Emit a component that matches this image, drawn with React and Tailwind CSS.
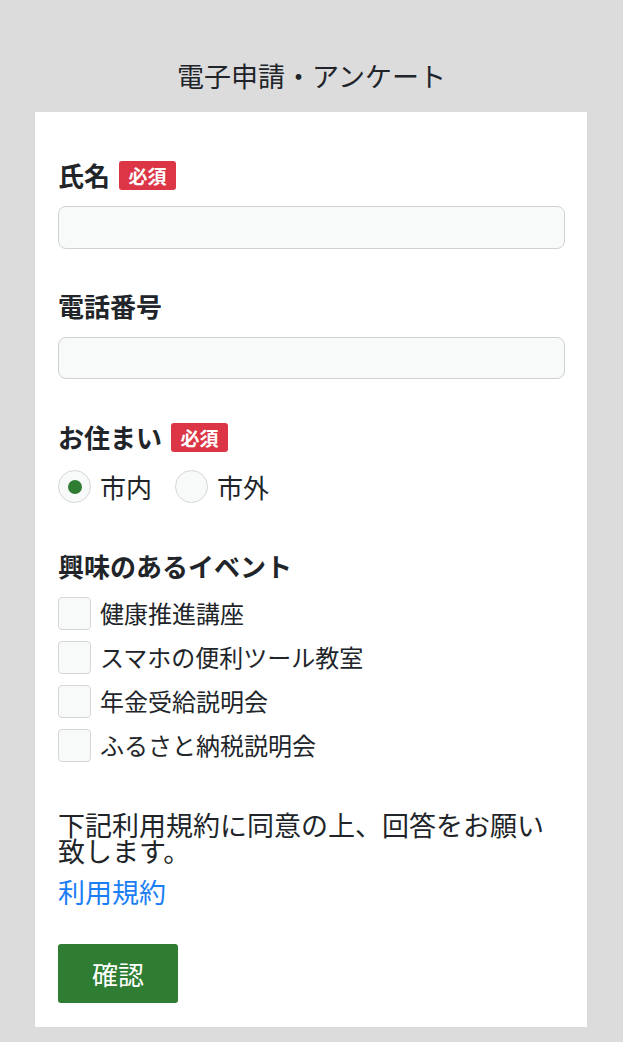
const FONT = { fontFamily: '"Noto Sans CJK JP", "Noto Sans", sans-serif' };

const Badge = () => (
  <span className="ml-[9px] inline-flex h-[29px] w-[57px] items-center justify-center rounded-[3px] bg-[#dc3545] text-[19px] font-bold leading-none text-white">
    必須
  </span>
);

const Label = ({ children, required, className = "" }) => (
  <div className={`flex h-[30px] items-center ${className}`}>
    <span className="text-[26px] font-bold leading-none text-[#212529]">{children}</span>
    {required && <Badge />}
  </div>
);

const events = ["健康推進講座", "スマホの便利ツール教室", "年金受給説明会", "ふるさと納税説明会"];

export default function App() {
  return (
    <div className="min-h-screen bg-[#dcdcdc] pb-[15px]" style={FONT}>
      <h1 className="pt-[62px] pb-[22px] text-center text-[27px] leading-[28px] font-normal text-[#212529]">
        電子申請・アンケート
      </h1>

      <div className="ml-[35px] w-[552px] bg-white px-[23px] pt-[48px] pb-[24px]">
        <Label required>氏名</Label>
        <div className="mt-[16px] h-[43px] w-[507px] rounded-[8px] border border-[#cfd2d4] bg-[#f8f9f9]" />

        <Label className="mt-[42px]">電話番号</Label>
        <div className="mt-[16px] h-[42px] w-[507px] rounded-[8px] border border-[#cfd2d4] bg-[#f8f9f9]" />

        <Label required className="mt-[43px]">お住まい</Label>
        <div className="mt-[18px] flex h-[33px] items-center">
          <span className="flex h-[33px] w-[33px] items-center justify-center rounded-full border border-[#d4d6d8] bg-[#f8f9f9]">
            <span className="h-[14px] w-[14px] rounded-full bg-[#2e7d32]" />
          </span>
          <span className="ml-[9px] text-[26px] leading-none text-[#212529]">市内</span>
          <span className="ml-[23px] h-[33px] w-[33px] rounded-full border border-[#d4d6d8] bg-[#f8f9f9]" />
          <span className="ml-[9px] text-[26px] leading-none text-[#212529]">市外</span>
        </div>

        <Label className="mt-[48px]">興味のあるイベント</Label>
        <div className="mt-[10px]">
          {events.map((e) => (
            <div key={e} className="flex h-[44px] items-center">
              <span className="h-[33px] w-[33px] rounded-[4px] border border-[#d4d6d8] bg-[#f8f9f9]" />
              <span className="ml-[9px] text-[24px] leading-none text-[#212529]">{e}</span>
            </div>
          ))}
        </div>

        <p className="mt-[45px] text-[27px] leading-[26px] text-[#212529]">
          下記利用規約に同意の上、回答をお願い致します。
        </p>
        <a href="#" className="mt-[15px] block text-[27px] leading-[26px] text-[#1a7ef5]">
          利用規約
        </a>

        <button className="mt-[39px] flex h-[59px] w-[120px] items-center justify-center rounded-[3px] bg-[#2e7d32] text-[26px] text-white">
          確認
        </button>
      </div>
    </div>
  );
}
